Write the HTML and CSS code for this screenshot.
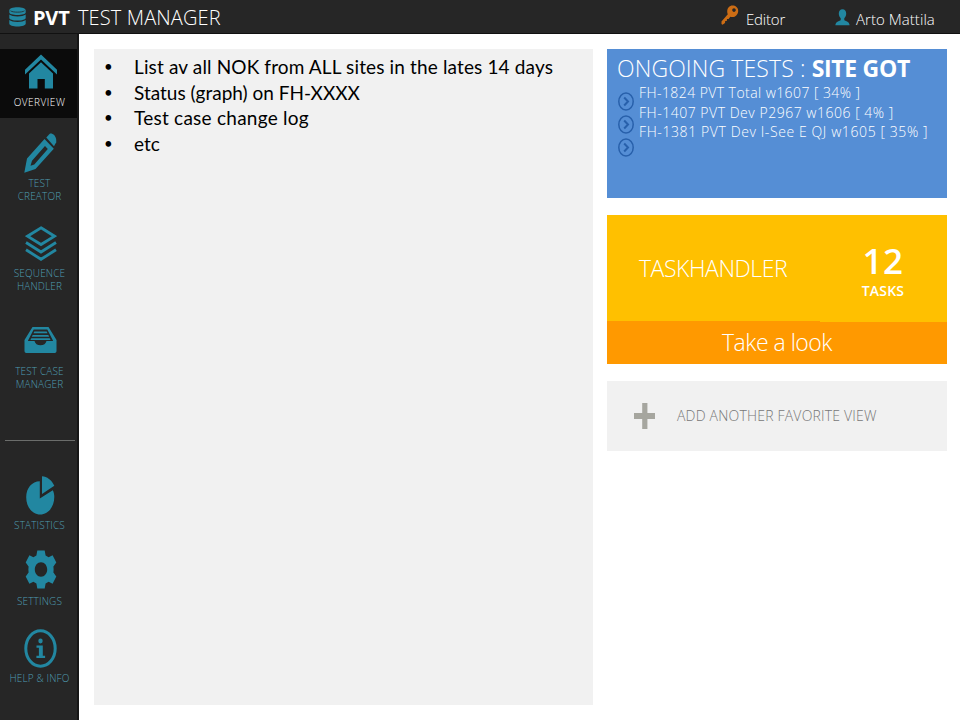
FILE: index.html
```html
<!DOCTYPE html>
<html lang="en">
<head>
<meta charset="utf-8">
<title>PVT Test Manager</title>
<link rel="stylesheet" href="styles.css">
</head>
<body>
<header class="topbar">
  <svg class="logo" width="17" height="20" viewBox="0 0 17 20"><path d="M.3 3.2C.3 1.5 4 .2 8.500.2s8.200 1.300 8.200 3v2.300c0 1.400-3.700 2.500-8.200 2.500S.3 6.900.3 5.500zM.3 7.500c1.500 1.300 4.700 1.900 8.200 1.900s6.700-.6 8.200-1.900v3.500c0 1.400-3.700 2.600-8.200 2.600S.3 12.400.3 11zM.3 13c1.500 1.300 4.700 1.900 8.200 1.900s6.700-.6 8.200-1.900v3.700c0 1.500-3.700 2.800-8.200 2.800S.3 18.200.3 16.700z"/><path class="groove" d="M1.500 3.800c2 1.800 12 1.800 14 0"/></svg>
  <h1 class="brand"><b>PVT</b><span>TEST MANAGER</span></h1>
  <div class="role">
    <svg class="key" width="18" height="21" viewBox="0 0 18 21"><path fill-rule="evenodd" d="M11.500.5c3 0 5.700 2 5.700 5.200 0 3.600-2.600 6.400-5.800 6.400-.8 0-1.500-.1-2.100-.4L7.600 14H6l-.2 2H4.200L4 18l-2.500 1.800L.5 19v-2.600l6.300-7.200c-.4-.9-.6-1.700-.6-2.700C6.200 3 8.500.5 11.500.5zM13 3.200c-1 0-1.800.9-1.800 1.900S12 6.900 13 6.900s1.800-.8 1.800-1.800S14 3.200 13 3.200z"/></svg>
    <span>Editor</span>
  </div>
  <div class="user">
    <svg width="15" height="17" viewBox="0 0 15 17"><path d="M7.500.3c2.300 0 3.700 1.700 3.700 4.200 0 2-.8 3.600-1.900 4.700v2.100c1.700.9 5 1.300 5.300 4.900H.4c.3-3.600 3.600-4 5.300-4.900V9.200C4.600 8.100 3.800 6.500 3.800 4.500 3.800 2 5.200.3 7.500.3z"/></svg>
    <span>Arto Mattila</span>
  </div>
</header>
<div class="shell">
  <nav class="sidebar">
    <a class="item overview active">
      <svg width="32" height="35" viewBox="0 0 32 35"><path d="M16 .5l16 15.200v4.800L16 5.500 0 20.500v-4.800zM16 8.200l12 11.300V34.500h-8.200V25h-7.300v9.500H4V19.500z"/></svg>
      <span>OVERVIEW</span>
    </a>
    <a class="item creator">
      <svg width="33" height="40" viewBox="0 0 33 40"><path fill-rule="evenodd" d="M20.500 6l9.300 9.700L11.500 36 .3 39.700 3 25.500zM21 13L8 27.800l-1.500 5 3.800-1.300L23.800 16z"/><path d="M22.300 4.500L25.500 1c2-1.500 7.500 1.500 6.700 8.200l-2.200 4z"/></svg>
      <span>TEST<br>CREATOR</span>
    </a>
    <a class="item sequence">
      <svg width="32" height="35" viewBox="0 0 32 35"><g class="line"><path d="M16 1.800L29.500 10.200 16 18.500 2.500 10.200z"/><path d="M1 16.500l15 9.500 15-9.500M1 23.800l15 9.500 15-9.500"/></g></svg>
      <span>SEQUENCE<br>HANDLER</span>
    </a>
    <a class="item cases">
      <svg width="33" height="26" viewBox="0 0 33 26"><path fill-rule="evenodd" d="M8.500 0h16L32.500 13v11c0 1.200-.7 2-1.800 2H2.300C1.200 26 .5 25.200.5 24V13zM9.700 2.500L3.800 14h6.700c.7 2.800 2.700 4.300 6 4.300s5.300-1.500 6-4.300h6.700L23.300 2.500z"/><path d="M10.300 4.500h12.400l.8 1.800h-14zM8.700 8h15.600l.9 1.800H7.800zM7.300 11.300h18.400l.9 1.800H6.400z"/></svg>
      <span>TEST CASE<br>MANAGER</span>
    </a>
    <hr class="divider">
    <a class="item statistics">
      <svg width="30" height="39" viewBox="0 0 30 39"><path d="M13.800 5.200v17.300l13-8.300c1 2 1.500 4.200 1.500 6.900C28.300 31 22 38.500 14.200 38.500S.2 31 .2 21.200C.2 12 6 5.200 13.800 5.200z"/><path d="M16 .3c5 .4 9.500 3.500 12.300 9.500L16 18z"/></svg>
      <span>STATISTICS</span>
    </a>
    <a class="item settings">
      <svg width="32" height="39" viewBox="0 0 32 39"><path fill-rule="evenodd" d="M12.300.5h7.400l.9 5 3 1.800 4-2 3.700 7.200-2.900 4c.3 2 .3 4 0 6l2.900 4-3.700 7.200-4-2-3 1.800-.9 5h-7.400l-.9-5-3-1.800-4 2L.7 26.500l2.900-4c-.3-2-.3-4 0-6l-2.900-4 3.700-7.200 4 2 3-1.800zM16 12.300c-3.500 0-6.200 3.200-6.200 7.200s2.700 7.200 6.200 7.200 6.200-3.200 6.200-7.200-2.700-7.200-6.200-7.200z"/></svg>
      <span>SETTINGS</span>
    </a>
    <a class="item help">
      <svg width="33" height="39" viewBox="0 0 33 39"><ellipse class="ring" cx="16.500" cy="19.500" rx="14.700" ry="17.700"/><ellipse cx="16.500" cy="12" rx="2.200" ry="2.400"/><path d="M12.500 16.500h6.300v10.200h2.300V29h-8.700v-2.300h2.500v-7.900h-2.400z"/></svg>
      <span>HELP &amp; INFO</span>
    </a>
  </nav>
  <main class="content">
    <section class="notes">
      <ul>
        <li><span class="n1">List av all NOK from ALL sites in the lates 14 days</span></li>
        <li><span>Status (graph) on FH-XXXX</span></li>
        <li><span class="n3">Test case change log</span></li>
        <li><span>etc</span></li>
      </ul>
    </section>
    <div class="tiles">
      <section class="ongoing">
        <h2><span>ONGOING TESTS : </span><b>SITE GOT</b></h2>
        <div class="tests">
          <div class="arrows">
            <svg width="16" height="19" viewBox="0 0 16 19"><ellipse cx="8" cy="9.500" rx="7.200" ry="8.500"/><path d="M6.200 5.500l3.800 4-3.800 4"/></svg>
            <svg width="16" height="19" viewBox="0 0 16 19"><ellipse cx="8" cy="9.500" rx="7.200" ry="8.500"/><path d="M6.200 5.500l3.800 4-3.800 4"/></svg>
            <svg width="16" height="19" viewBox="0 0 16 19"><ellipse cx="8" cy="9.500" rx="7.200" ry="8.500"/><path d="M6.200 5.500l3.800 4-3.800 4"/></svg>
          </div>
          <div class="runs">
            <div class="r1">FH-1824 PVT Total w1607 [ 34% ]</div>
            <div class="r2">FH-1407 PVT Dev P2967 w1606 [ 4% ]</div>
            <div class="r3">FH-1381 PVT Dev I-See E QJ w1605 [ 35% ]</div>
          </div>
        </div>
      </section>
      <section class="tasks">
        <div class="summary">
          <h2>TASKHANDLER</h2>
          <div class="count"><strong>12</strong><span>TASKS</span></div>
        </div>
        <a class="look"><span>Take a look</span></a>
      </section>
      <section class="add">
        <svg width="22" height="26" viewBox="0 0 22 26"><path d="M8.200 0h5.200v10H21v6h-7.600v10H8.200V16H0v-6h8.200z"/></svg>
        <span>ADD ANOTHER FAVORITE VIEW</span>
      </section>
    </div>
  </main>
</div>
</body>
</html>
```
FILE: styles.css
```css
* { box-sizing: border-box; }
body {
  margin: 0;
  width: 960px;
  height: 720px;
  overflow: hidden;
  background: #fff;
  font-family: "Open Sans", "Noto Sans", sans-serif;
  font-weight: 300;
}
h1, h2, ul { margin: 0; padding: 0; font-weight: 300; }
svg { display: block; flex: none; fill: #2287a1; }
span, .runs div { white-space: nowrap; }

.topbar {
  display: flex;
  height: 34px;
  padding-left: 9px;
  background: #262626;
  border-bottom: 1px solid #111;
  color: #fff;
}
.logo { margin-top: 7px; }
.groove { fill: none; stroke: #262626; stroke-width: .8; }
.brand {
  display: flex;
  width: 689px;
  padding-left: 7px;
  font-size: 20px;
  line-height: 35px;
}
.brand b { width: 45px; font-weight: 700; letter-spacing: -.2px; }
.brand span { letter-spacing: .13px; }
.role, .user { display: flex; font-size: 15px; line-height: 39px; }
.role { width: 114px; margin-left: 6px; }
.role span { margin-left: 7px; letter-spacing: -.2px; }
.key { margin-top: 5px; fill: #cc6d15; }
.user svg { margin-top: 9px; }
.user span { margin-left: 6px; letter-spacing: .05px; }

.shell { display: flex; height: 686px; }
.sidebar {
  width: 79px;
  padding-top: 15px;
  background: #262626;
  border-right: 2px solid #161616;
}
.item {
  display: flex;
  flex-direction: column;
  align-items: center;
  color: #4f9db1;
  font-size: 10px;
  line-height: 13px;
  letter-spacing: .15px;
  text-align: center;
}
.item span { margin-left: 2px; }
.item svg { margin-left: 4px; }
.overview { height: 69px; padding-top: 5px; background: #0b0b0b; color: #fff; letter-spacing: .5px; }
.overview span { margin-top: 7px; }
.creator { height: 93px; padding-top: 15px; }
.creator span { margin-top: 4px; }
.sequence { height: 98px; padding-top: 15px; }
.sequence span { margin-top: 6px; }
.cases { height: 131px; padding-top: 18px; }
.cases span { margin-top: 12px; }
.divider { width: 70px; height: 1px; margin: 0 0 0 5px; border: 0; background: #6b6d6b; }
.statistics { height: 97px; padding-top: 35px; }
.statistics span { margin-top: 4px; }
.settings { height: 78px; padding-top: 12px; }
.settings span { margin-top: 6px; }
.help { padding-top: 13px; }
.help span { margin-top: 4px; }
.line { fill: none; stroke: #2287a1; stroke-width: 2.800; }
.ring { fill: none; stroke: #2287a1; stroke-width: 3; }

.content { display: flex; flex: 1; gap: 14px; padding: 15px 13px 15px 15px; }
.notes { width: 499px; padding: 5px 0 0 10px; background: #f1f1f1; }
.notes ul {
  list-style: none;
  color: #000;
  font: 400 19px/25.600px Lato, sans-serif;
}
.notes li { display: flex; }
.notes li::before { content: "•"; width: 30px; font-size: 15px; }
.n1 { letter-spacing: .14px; }
.n3 { letter-spacing: .25px; }
.tiles { display: flex; flex-direction: column; flex: 1; gap: 17px; color: #fff; }

.ongoing { height: 149px; padding-left: 10px; background: #558ed5; }
.ongoing h2 { height: 34px; font-size: 23px; line-height: 39px; white-space: pre; }
.ongoing h2 span { letter-spacing: .12px; white-space: pre; }
.ongoing b { font-weight: 700; letter-spacing: -.3px; }
.tests { display: flex; gap: 5px; }
.arrows { display: flex; flex-direction: column; gap: 4px; padding: 9px 0 0 1px; }
.arrows svg { fill: none; stroke: #2860ab; stroke-width: 1.500; }
.arrows path { stroke-width: 2; }
.runs { font-size: 14px; line-height: 19.500px; }
.r1 { letter-spacing: .43px; }
.r2 { letter-spacing: .52px; }
.r3 { letter-spacing: .6px; }

.tasks { height: 149px; background: #ff9900; }
.summary { display: flex; height: 106px; background: #ffc000; }
.summary h2 { width: 246px; padding-left: 32px; font-size: 23px; line-height: 107px; letter-spacing: -.45px; }
.count { width: 60px; display: flex; flex-direction: column; align-items: center; }
.count strong { margin-top: 25px; font-size: 35px; font-weight: 600; line-height: 41px; letter-spacing: .6px; }
.count span { font-size: 14px; font-weight: 600; line-height: 19px; letter-spacing: .2px; }
.look {
  display: flex;
  justify-content: center;
  height: 43px;
  background: linear-gradient(#ffc000, #ffc000) right top / 127px 1px no-repeat;
  font-size: 23px;
  line-height: 43px;
  letter-spacing: -.5px;
}

.add { display: flex; align-items: center; height: 70px; padding-left: 27px; background: #f1f1f1; color: #777; }
.add svg { fill: #a6a69f; }
.add span { margin: -2px 0 0 21px; font-size: 14px; letter-spacing: .2px; }
```
